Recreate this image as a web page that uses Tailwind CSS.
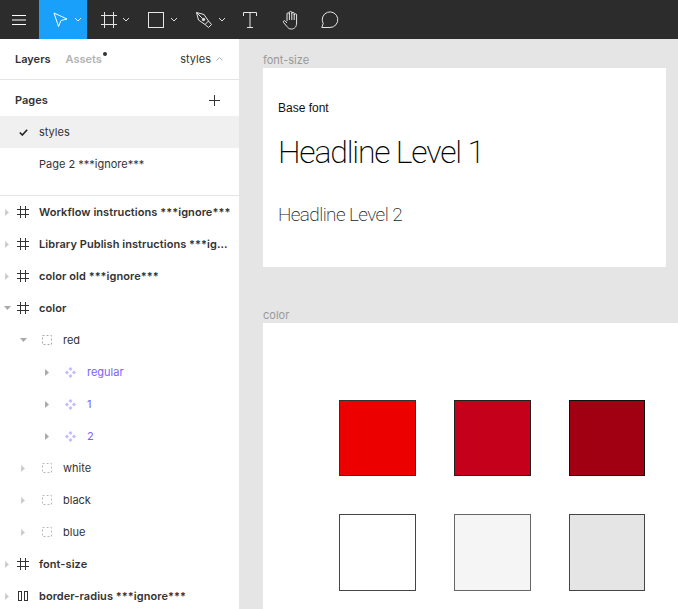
<!DOCTYPE html>
<html lang="en">
<head>
    <meta charset="UTF-8">
    <title>Figma styles</title>
    <script src="https://cdn.jsdelivr.net/npm/@tailwindcss/browser@4"></script>
</head>
<body class="bg-[#e5e5e5] overflow-hidden font-['Inter',sans-serif]">
    <div class="h-[609px] w-[678px] flex flex-col overflow-hidden">
        <!-- toolbar -->
        <div class="h-[39px] shrink-0 bg-[#2c2c2c] flex items-stretch text-white">
            <div class="w-[39px] flex items-center">
                <svg class="ml-[12px]" width="14" height="10" viewBox="0 0 14 10" fill="none" stroke="#fff" stroke-width="1"><path d="M0 .5h14M0 5h14M0 9.500h14"/></svg>
            </div>
            <div class="w-[48px] bg-[#18a0fb] flex items-center">
                <svg class="ml-[14px]" width="15" height="15" viewBox="0 0 15 15" fill="none" stroke="#fff" stroke-width="1"><path d="M1 1 14 7 8 8.500 5.500 14.500Z"/></svg>
                <svg class="ml-[6px]" width="8" height="5" viewBox="0 0 8 5" fill="none" stroke="#fff"><path d="M1 1l3 3 3-3"/></svg>
            </div>
            <div class="w-[48px] flex items-center">
                <svg class="ml-[14px]" width="16" height="16" viewBox="0 0 16 16" fill="none" stroke="#e6e6e6" stroke-width="1"><path d="M3.500 0v16M12.500 0v16M0 3.500h16M0 12.500h16"/></svg>
                <svg class="ml-[5px]" width="8" height="5" viewBox="0 0 8 5" fill="none" stroke="#ddd"><path d="M1 1l3 3 3-3"/></svg>
            </div>
            <div class="w-[48px] flex items-center">
                <svg class="ml-[13px]" width="16" height="16" viewBox="0 0 16 16" fill="none" stroke="#e6e6e6" stroke-width="1"><rect x=".5" y=".5" width="15" height="15"/></svg>
                <svg class="ml-[6px]" width="8" height="5" viewBox="0 0 8 5" fill="none" stroke="#ddd"><path d="M1 1l3 3 3-3"/></svg>
            </div>
            <div class="w-[48px] flex items-center">
                <svg class="ml-[13px]" width="16" height="16" viewBox="0 0 16 16" fill="none" stroke="#e6e6e6" stroke-width="1"><path d="M.5 .5 8 2.500 12.500 9 9 12.500 2.500 8ZM12.500 9 15.500 12.500 12.500 15.500 9 12.500M.5 .5 6.500 6.500"/><circle cx="7.500" cy="7.500" r="1.200" fill="#e6e6e6"/></svg>
                <svg class="ml-[6px]" width="8" height="5" viewBox="0 0 8 5" fill="none" stroke="#ddd"><path d="M1 1l3 3 3-3"/></svg>
            </div>
            <div class="w-[38px] flex items-center">
                <svg class="ml-[12px]" width="14" height="16" viewBox="0 0 14 16" fill="none" stroke="#e6e6e6" stroke-width="1"><path d="M.5 4V.5h13V4M7 .5v15M4 15.500h6"/></svg>
            </div>
            <div class="w-[43px] flex items-center justify-center">
                <svg width="18" height="20" viewBox="0 0 18 20" fill="none" stroke="#e6e6e6" stroke-width="1"><path d="M5 11V4a1.200 1.200 0 0 1 2.400 0V2.600a1.200 1.200 0 0 1 2.400 0V3.500a1.200 1.200 0 0 1 2.400 0V5a1.200 1.200 0 0 1 2.400 0v8c0 3.500-2 6-5 6H9c-2 0-3-1-4-2.500L1.500 12.500C.8 11.500 2 10 3.200 11L5 13M7.400 4v6M9.800 3v7M12.200 4v6"/></svg>
            </div>
            <div class="w-[40px] flex items-center">
                <svg class="ml-[9px]" width="18" height="17" viewBox="0 0 18 17" fill="none" stroke="#e6e6e6" stroke-width="1"><path d="M.8 16.500h8.200a7.800 7.800 0 1 0-6.800-4Z"/></svg>
            </div>
        </div>

        <div class="flex-1 flex min-h-0">
            <!-- left panel -->
            <div class="w-[240px] shrink-0 bg-white border-r border-[#e5e5e5] text-[11px] leading-4 text-[#333]">
                <div class="h-[41px] border-b border-[#e5e5e5] flex items-center pl-[15px] pr-[16px] font-medium">
                    <span class="font-semibold">Layers</span>
                    <span class="ml-[15px] text-[#b3b3b3] relative font-semibold">Assets<span class="absolute -right-[5px] top-[1px] w-[4px] h-[4px] rounded-full bg-[#333]"></span></span>
                    <span class="ml-auto font-normal">styles</span>
                    <svg class="ml-[5px]" width="7" height="4" viewBox="0 0 7 4" fill="none" stroke="#b3b3b3"><path d="M.5 3.500l3-3 3 3"/></svg>
                </div>
                <div class="h-[36px] flex items-center pt-[4px] pl-[15px] pr-[19px] font-semibold">
                    <span>Pages</span>
                    <svg class="ml-auto" width="11" height="11" viewBox="0 0 11 11" fill="none" stroke="#333"><path d="M5.500 0v11M0 5.500h11"/></svg>
                </div>
                <div class="h-[32px] bg-[#f0f0f0] flex items-center">
                    <svg class="ml-[19px]" width="9" height="7" viewBox="0 0 9 7" fill="none" stroke="#222" stroke-width="1.600"><path d="M.800 3.500 3.300 6 8.200 .800"/></svg>
                    <span class="ml-[11px]">styles</span>
                </div>
                <div class="h-[32px] flex items-center pl-[39px]">Page 2 ***ignore***</div>
                <div class="h-[16px] border-b border-[#e5e5e5]"></div>

                <div class="h-[32px] flex items-center font-semibold tracking-[0.06px]">
                    <svg class="ml-[5px]" width="4" height="7" viewBox="0 0 4 7" fill="#ccc"><path d="M0 0l4 3.500L0 7z"/></svg>
                    <svg class="ml-[8px]" width="12" height="12" viewBox="0 0 12 12" fill="none" stroke="#333"><path d="M3.500 0v12M8.500 0v12M0 3.500h12M0 8.500h12"/></svg>
                    <span class="ml-[10px] whitespace-nowrap">Workflow instructions ***ignore***</span>
                </div>
                <div class="h-[32px] flex items-center font-semibold tracking-[0.06px]">
                    <svg class="ml-[5px]" width="4" height="7" viewBox="0 0 4 7" fill="#ccc"><path d="M0 0l4 3.500L0 7z"/></svg>
                    <svg class="ml-[8px]" width="12" height="12" viewBox="0 0 12 12" fill="none" stroke="#333"><path d="M3.500 0v12M8.500 0v12M0 3.500h12M0 8.500h12"/></svg>
                    <span class="ml-[10px] whitespace-nowrap">Library Publish instructions ***ig...</span>
                </div>
                <div class="h-[32px] flex items-center font-semibold tracking-[0.06px]">
                    <svg class="ml-[5px]" width="4" height="7" viewBox="0 0 4 7" fill="#ccc"><path d="M0 0l4 3.500L0 7z"/></svg>
                    <svg class="ml-[8px]" width="12" height="12" viewBox="0 0 12 12" fill="none" stroke="#333"><path d="M3.500 0v12M8.500 0v12M0 3.500h12M0 8.500h12"/></svg>
                    <span class="ml-[10px]">color old ***ignore***</span>
                </div>
                <div class="h-[32px] flex items-center font-semibold tracking-[0.06px]">
                    <svg class="ml-[4px]" width="7" height="4" viewBox="0 0 7 4" fill="#aaa"><path d="M0 0h7L3.500 4z"/></svg>
                    <svg class="ml-[6px]" width="12" height="12" viewBox="0 0 12 12" fill="none" stroke="#333"><path d="M3.500 0v12M8.500 0v12M0 3.500h12M0 8.500h12"/></svg>
                    <span class="ml-[10px]">color</span>
                </div>
                <div class="h-[32px] flex items-center">
                    <svg class="ml-[20px]" width="7" height="4" viewBox="0 0 7 4" fill="#aaa"><path d="M0 0h7L3.500 4z"/></svg>
                    <svg class="ml-[15px]" width="10" height="10" viewBox="0 0 10 10" fill="none" stroke="#aaa" stroke-dasharray="2 2"><rect x=".5" y=".5" width="9" height="9"/></svg>
                    <span class="ml-[11px]">red</span>
                </div>
                <div class="h-[32px] flex items-center text-[#7b61ff]">
                    <svg class="ml-[45px]" width="4" height="7" viewBox="0 0 4 7" fill="#aaa"><path d="M0 0l4 3.500L0 7z"/></svg>
                    <svg class="ml-[16px]" width="11" height="11" viewBox="0 0 11 11" fill="#c4b8ff"><path d="M5.500 0 7.500 2 5.500 4 3.500 2ZM5.500 7 7.500 9 5.500 11 3.500 9ZM2 3.500 4 5.500 2 7.500 0 5.500ZM9 3.500 11 5.500 9 7.500 7 5.500Z"/></svg>
                    <span class="ml-[11px]">regular</span>
                </div>
                <div class="h-[32px] flex items-center text-[#7b61ff]">
                    <svg class="ml-[45px]" width="4" height="7" viewBox="0 0 4 7" fill="#aaa"><path d="M0 0l4 3.500L0 7z"/></svg>
                    <svg class="ml-[16px]" width="11" height="11" viewBox="0 0 11 11" fill="#c4b8ff"><path d="M5.500 0 7.500 2 5.500 4 3.500 2ZM5.500 7 7.500 9 5.500 11 3.500 9ZM2 3.500 4 5.500 2 7.500 0 5.500ZM9 3.500 11 5.500 9 7.500 7 5.500Z"/></svg>
                    <span class="ml-[11px]">1</span>
                </div>
                <div class="h-[32px] flex items-center text-[#7b61ff]">
                    <svg class="ml-[45px]" width="4" height="7" viewBox="0 0 4 7" fill="#aaa"><path d="M0 0l4 3.500L0 7z"/></svg>
                    <svg class="ml-[16px]" width="11" height="11" viewBox="0 0 11 11" fill="#c4b8ff"><path d="M5.500 0 7.500 2 5.500 4 3.500 2ZM5.500 7 7.500 9 5.500 11 3.500 9ZM2 3.500 4 5.500 2 7.500 0 5.500ZM9 3.500 11 5.500 9 7.500 7 5.500Z"/></svg>
                    <span class="ml-[11px]">2</span>
                </div>
                <div class="h-[32px] flex items-center">
                    <svg class="ml-[21px]" width="4" height="7" viewBox="0 0 4 7" fill="#ccc"><path d="M0 0l4 3.500L0 7z"/></svg>
                    <svg class="ml-[17px]" width="10" height="10" viewBox="0 0 10 10" fill="none" stroke="#bbb" stroke-dasharray="2 2"><rect x=".5" y=".5" width="9" height="9"/></svg>
                    <span class="ml-[11px]">white</span>
                </div>
                <div class="h-[32px] flex items-center">
                    <svg class="ml-[21px]" width="4" height="7" viewBox="0 0 4 7" fill="#ccc"><path d="M0 0l4 3.500L0 7z"/></svg>
                    <svg class="ml-[17px]" width="10" height="10" viewBox="0 0 10 10" fill="none" stroke="#bbb" stroke-dasharray="2 2"><rect x=".5" y=".5" width="9" height="9"/></svg>
                    <span class="ml-[11px]">black</span>
                </div>
                <div class="h-[32px] flex items-center">
                    <svg class="ml-[21px]" width="4" height="7" viewBox="0 0 4 7" fill="#ccc"><path d="M0 0l4 3.500L0 7z"/></svg>
                    <svg class="ml-[17px]" width="10" height="10" viewBox="0 0 10 10" fill="none" stroke="#bbb" stroke-dasharray="2 2"><rect x=".5" y=".5" width="9" height="9"/></svg>
                    <span class="ml-[11px]">blue</span>
                </div>
                <div class="h-[32px] flex items-center font-semibold tracking-[0.06px]">
                    <svg class="ml-[5px]" width="4" height="7" viewBox="0 0 4 7" fill="#ccc"><path d="M0 0l4 3.500L0 7z"/></svg>
                    <svg class="ml-[8px]" width="12" height="12" viewBox="0 0 12 12" fill="none" stroke="#333"><path d="M3.500 0v12M8.500 0v12M0 3.500h12M0 8.500h12"/></svg>
                    <span class="ml-[10px]">font-size</span>
                </div>
                <div class="h-[32px] flex items-center font-semibold tracking-[0.06px]">
                    <svg class="ml-[5px]" width="4" height="7" viewBox="0 0 4 7" fill="#ccc"><path d="M0 0l4 3.500L0 7z"/></svg>
                    <svg class="ml-[9px]" width="10" height="10" viewBox="0 0 10 10" fill="none" stroke="#333"><rect x=".5" y=".5" width="3" height="9"/><rect x="6.500" y=".5" width="3" height="9"/></svg>
                    <span class="ml-[11px] whitespace-nowrap">border-radius ***ignore***</span>
                </div>
            </div>

            <!-- canvas -->
            <div class="flex-1 min-w-0 overflow-hidden pl-[23px] pt-[13px]">
                <div class="text-[11px] leading-4 text-[#999]">font-size</div>
                <div class="w-[403px] h-[199px] bg-white pl-[15px] text-black font-['Roboto',sans-serif]">
                    <div class="pt-[32px] text-[12px] leading-4 font-['Liberation_Sans',sans-serif] text-[#111]">Base font</div>
                    <div class="mt-[18px] text-[32px] leading-9 font-extralight tracking-[-1.2px] whitespace-nowrap">Headline Level 1</div>
                    <div class="mt-[33px] text-[19px] leading-6 font-extralight tracking-[-0.6px] text-[#222] whitespace-nowrap">Headline Level 2</div>
                </div>
                <div class="mt-[40px] text-[11px] leading-4 text-[#999]">color</div>
                <div class="w-[500px] h-[300px] bg-white pl-[76.33px] pt-[76.67px]">
                    <div class="grid grid-cols-[76.67px_76.67px_76.67px] gap-x-[38px] gap-y-[38px]">
                        <div class="h-[76.67px] bg-[#ec0000] border border-[#333]"></div>
                        <div class="h-[76.67px] bg-[#c4001a] border border-[#222]"></div>
                        <div class="h-[76.67px] bg-[#a00012] border border-[#111]"></div>
                        <div class="h-[76.67px] bg-white border border-[#444]"></div>
                        <div class="h-[76.67px] bg-[#f5f5f5] border border-[#666]"></div>
                        <div class="h-[76.67px] bg-[#e5e5e5] border border-[#444]"></div>
                    </div>
                </div>
            </div>
        </div>
    </div>
</body>
</html>
